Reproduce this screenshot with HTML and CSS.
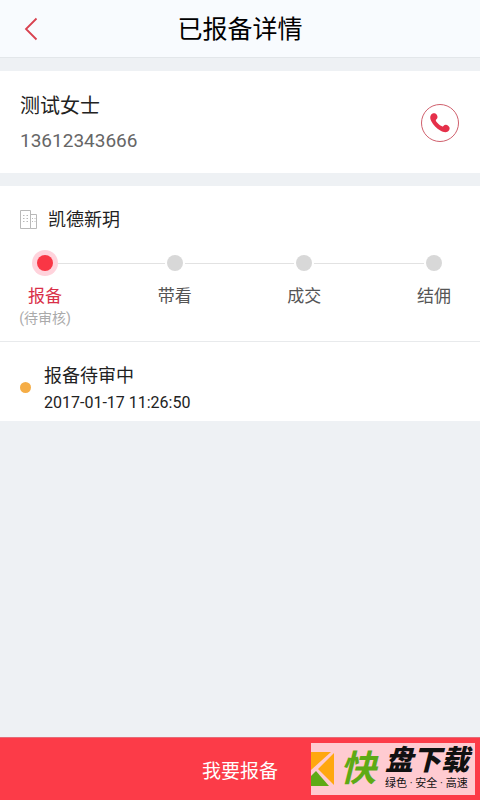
FILE: index.html
```html
<!DOCTYPE html>
<html lang="zh-CN">
<head>
<meta charset="utf-8">
<meta name="viewport" content="width=device-width, initial-scale=1">
<title>已报备详情</title>
<link rel="stylesheet" href="styles.css">
</head>
<body>
<header class="topbar">
  <button class="back" type="button" aria-label="返回">
    <svg width="14" height="24" viewBox="0 0 14 24"><path d="M12.500 1.500 2 12 12.500 22.500" fill="none" stroke="#d8414f" stroke-width="1.800"/></svg>
  </button>
  <h1 class="title">已报备详情</h1>
</header>
<main class="content">
  <section class="card contact">
    <div>
      <h2 class="name">测试女士</h2>
      <p class="phone">13612343666</p>
    </div>
    <a class="call" href="tel:13612343666" aria-label="拨打电话">
      <svg width="22" height="22" viewBox="0 0 22 22" fill="#e5304a"><path d="M1.800 3.200C3.200 .8 6.200 .7 7.600 2.600 9 4.600 8.800 6.300 7.200 7.500 6.600 8 6.700 8.600 7.200 9.400 8.500 11.300 10.300 12.900 12.500 14.100 13.300 14.600 13.900 14.500 14.400 13.900 15.800 12.400 17.700 12.500 19.400 13.900 21.300 15.400 21 17.900 18.900 19.400 16.900 20.800 14.200 20.300 11.300 18.600 7.500 16.300 4.300 12.900 2.300 9.200 1.100 6.900 .9 4.800 1.800 3.200Z"/></svg>
    </a>
  </section>
  <section class="card">
    <h2 class="project">
      <svg width="18" height="20" viewBox="0 0 18 20" fill="none" stroke="#b9b9b9"><path d="M.5 18.500V.5H10.500V18.500ZM10.500 4.500H16.500V18.500H10.500"/><path d="M3 5.500H8.500M3 8.500H8.500M3 11.500H8.500" stroke-dasharray="1.500 2"/><path d="M12 8.500H15.500M12 11.500H15.500" stroke-dasharray="1 1.500"/></svg>
      凯德新玥
    </h2>
    <ol class="steps">
      <li class="step active"><span class="dot"></span><span class="label">报备</span><small class="state">(待审核)</small></li>
      <li class="line" aria-hidden="true"></li>
      <li class="step"><span class="dot"></span><span class="label">带看</span></li>
      <li class="line" aria-hidden="true"></li>
      <li class="step"><span class="dot"></span><span class="label">成交</span></li>
      <li class="line" aria-hidden="true"></li>
      <li class="step"><span class="dot"></span><span class="label">结佣</span></li>
    </ol>
    <div class="record">
      <span class="bullet"></span>
      <div>
        <p class="status">报备待审中</p>
        <time class="time" datetime="2017-01-17T11:26:50">2017-01-17 11:26:50</time>
      </div>
    </div>
  </section>
</main>
<footer class="footer">
  <button class="submit" type="button">我要报备</button>
  <div class="mark">
    <svg class="logo" width="23" height="34" viewBox="0 0 23 34"><path fill="#ffa70f" d="M0 0H20L0 18ZM23 1V33L7 17Z"/><path fill="#5eaa15" d="M0 24 5 19 18 34H0Z"/></svg>
    <span class="quick">快</span>
    <div class="mark-text">
      <span class="brand">盘下载</span>
      <span class="slogan">绿色 · 安全 · 高速</span>
    </div>
  </div>
</footer>
</body>
</html>
```

FILE: styles.css
```css
* {
  box-sizing: border-box;
}

body {
  display: flex;
  flex-direction: column;
  min-height: 100vh;
  margin: 0;
  background: #eef1f4;
  color: #222;
  font-family: Roboto, "Noto Sans CJK SC", sans-serif;
}

h1, h2, p, ol {
  margin: 0;
  padding: 0;
  font-weight: 400;
}

button {
  border: 0;
  font: inherit;
  cursor: pointer;
}

svg {
  display: block;
}

.topbar {
  display: grid;
  grid-template-columns: 64px 1fr 64px;
  height: 58px;
  border-bottom: 1px solid #e3e7ea;
  background: #f8fbfe;
}

.back {
  padding: 0 0 0 24px;
  background: none;
}

.title {
  padding-top: 2px;
  color: #000;
  font-size: 25px;
  line-height: 55px;
  text-align: center;
}

.content {
  display: flex;
  flex: 1;
  flex-direction: column;
  gap: 13px;
  padding-top: 13px;
}

.card {
  background: #fff;
}

.contact {
  display: flex;
  align-items: center;
  justify-content: space-between;
  padding: 16px 21px 15px 20px;
}

.name {
  padding-top: 1px;
  font-size: 20px;
  line-height: 36px;
}

.phone {
  color: #666;
  font-size: 19px;
  line-height: 34px;
}

.call {
  display: grid;
  place-items: center;
  width: 38px;
  height: 38px;
  border: 1px solid #d0606d;
  border-radius: 50%;
}

.project {
  display: flex;
  align-items: center;
  gap: 10px;
  padding: 18px 20px 12px;
  font-size: 18px;
  line-height: 32px;
}

.steps {
  display: flex;
  height: 93px;
  padding: 0 20px 0 19px;
  list-style: none;
}

.step {
  display: flex;
  flex-direction: column;
  align-items: center;
  width: 52px;
}

.dot {
  position: relative;
  width: 16px;
  height: 16px;
  margin: 7px 0;
  border-radius: 50%;
  background: #d8d8d8;
}

.active .dot {
  background: #f93645;
  box-shadow: 0 0 0 5px #ffd3dc;
}

.label {
  color: #555;
  font-size: 17px;
  line-height: 36px;
}

.active .label {
  color: #d92f48;
}

.state {
  color: #aaa;
  font-size: 14px;
  line-height: 8px;
  white-space: nowrap;
}

.line {
  flex: 1;
  height: 1px;
  margin: 15px -16px 0;
  background: #e2e2e2;
}

.record {
  display: flex;
  align-items: center;
  gap: 13px;
  padding: 18px 20px 7px;
  border-top: 1px solid #e8eaec;
}

.bullet {
  width: 11px;
  height: 11px;
  border-radius: 50%;
  background: #f5ad46;
}

.status {
  font-size: 18px;
  line-height: 32px;
}

.time {
  display: block;
  font-size: 16px;
  line-height: 22px;
}

.footer {
  position: relative;
}

.submit {
  display: block;
  width: 100%;
  height: 63px;
  border-top: 1px solid #e56b77;
  background: #fc3b48;
  color: #fff;
  font-size: 19px;
}

.mark {
  position: absolute;
  right: 5px;
  bottom: 5px;
  display: flex;
  align-items: center;
  width: 164px;
  height: 52px;
  background: #ffcbd1;
}

.quick {
  margin-left: 6px;
  color: #5eaa15;
  font-size: 36px;
  font-style: italic;
  font-weight: 700;
  line-height: 52px;
}

.mark-text {
  display: flex;
  flex-direction: column;
  margin-left: 9px;
  color: #111;
  white-space: nowrap;
}

.brand {
  font-size: 28px;
  font-style: italic;
  font-weight: 900;
  line-height: 30px;
}

.slogan {
  font-size: 11px;
  line-height: 16px;
}
```
